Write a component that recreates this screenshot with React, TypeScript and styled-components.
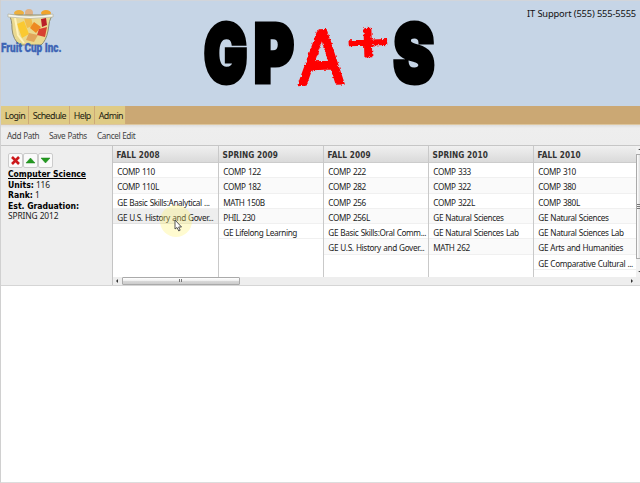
import React from "react";
import styled, { createGlobalStyle } from "styled-components";

const Global = createGlobalStyle`
  *{box-sizing:border-box}
  html,body{margin:0;padding:0;background:#fff;overflow:hidden}
  body{font-family:"Noto Sans",sans-serif;color:#222}
`;
const Page = styled.div`width:640px;height:483px;border-left:1px solid #d0d0d0;border-bottom:1px solid #ddd;background:#fff;overflow:hidden;`;
const Header = styled.header`height:106px;background:#c6d5e6;border-top:1px solid #d2d5da;display:grid;grid-template-columns:196px 250px 1fr;`;
const Brand = styled.svg`display:block;width:70px;height:60px;margin-left:-1px;overflow:visible;`;
const Title = styled.svg`display:block;width:250px;height:105px;overflow:visible;`;
const Support = styled.div`padding:6px 4px 0 0;text-align:right;font-size:9.3px;letter-spacing:-.14px;line-height:13px;color:#111;white-space:nowrap;`;
const Nav = styled.nav`display:flex;height:19px;background:#cba874;border-bottom:1px solid #ddc69f;`;
const NavItem = styled.a<{ $w: number }>`width:${p => p.$w}px;background:#dfcb85;border-right:1px solid #cda977;padding-left:3.8px;font-size:8.9px;letter-spacing:-.6px;line-height:20px;color:#1b1a10;white-space:nowrap;`;
const Toolbar = styled.div`height:21px;background:linear-gradient(#dedede,#eee 3px,#ededed);border-bottom:1px solid #c6c6c6;display:flex;padding-left:6px;`;
const Tool = styled.span<{ $w: number }>`width:${p => p.$w}px;font-size:8.2px;letter-spacing:-.4px;word-spacing:.4px;line-height:22px;color:#444;white-space:nowrap;`;
const Workspace = styled.main`display:flex;height:140px;background:#eee;border-bottom:1px solid #d5d5d5;`;
const Summary = styled.aside`width:112px;border-right:1px solid #c4c4c4;padding:7px 0 0 7px;font-size:8.4px;letter-spacing:-.1px;line-height:10.6px;color:#222;b{color:#000;font:bold 8.6px "DejaVu Sans Condensed","DejaVu Sans",sans-serif;letter-spacing:0}`;
const Buttons = styled.div`display:flex;height:16px;`;
const IconButton = styled.button`width:15px;height:15px;padding:1px;background:#fafafa;border:1px solid #ccc;border-radius:2px;svg{display:block}`;
const Degree = styled.div`font:bold 8.5px/10.6px "DejaVu Sans Condensed","DejaVu Sans",sans-serif;letter-spacing:0;text-decoration:underline;color:#000;`;
const GridArea = styled.section`flex:1;min-width:0;`;
const Columns = styled.div`display:flex;height:131px;background:#fff;`;
const Column = styled.div<{ $w: number; $last: boolean }>`width:${p => p.$w}px;flex:none;border-right:${p => p.$last ? "0" : "1px solid #c9c9c9"};`;
const Head = styled.div`height:17px;padding-left:3.5px;background:linear-gradient(#f0f0f0,#dadada);border-bottom:1px solid #ccc;font:bold 8.2px/19px "DejaVu Sans Condensed","DejaVu Sans",sans-serif;letter-spacing:.1px;color:#333;white-space:nowrap;`;
const Course = styled.div<{ $alt: boolean; $active: boolean }>`height:15.25px;padding-left:4.3px;white-space:nowrap;font-size:8.2px;letter-spacing:-.36px;word-spacing:.5px;line-height:17px;color:#222;background:${p => p.$active ? "#eee" : p.$alt ? "#fafafa" : "#fff"};border-bottom:1px solid ${p => p.$active ? "#e2e2e2" : "#f0f0f0"};`;
const VBar = styled.div`width:5px;background:#f1f1f1;display:flex;flex-direction:column;align-items:center;svg{display:block}`;
const VThumb = styled.div`width:5px;height:105px;margin-top:1px;border:1px solid #aaa;background:linear-gradient(90deg,#fff,#ddd);display:flex;align-items:center;justify-content:flex-end;`;
const HBar = styled.div`height:8px;display:flex;align-items:center;background:#eee;svg{display:block}`;
const HThumb = styled.div`width:118px;height:8px;border:1px solid #aaa;border-radius:1px;background:linear-gradient(#fff,#eee 50%,#d8d8d8 55%,#ccc);display:flex;align-items:center;justify-content:center;`;
const Push = styled.span`flex:1;`;
const Pointer = styled.svg`position:absolute;left:156px;top:201px;width:40px;height:40px;pointer-events:none;`;

const terms = [
  { name: "FALL 2008", width: 106, courses: ["COMP 110", "COMP 110L", "GE Basic Skills:Analytical ...", "GE U.S. History and Gover..."] },
  { name: "SPRING 2009", width: 105, courses: ["COMP 122", "COMP 182", "MATH 150B", "PHIL 230", "GE Lifelong Learning"] },
  { name: "FALL 2009", width: 105, courses: ["COMP 222", "COMP 282", "COMP 256", "COMP 256L", "GE Basic Skills:Oral Comm...", "GE U.S. History and Gover..."] },
  { name: "SPRING 2010", width: 105, courses: ["COMP 333", "COMP 322", "COMP 322L", "GE Natural Sciences", "GE Natural Sciences Lab", "MATH 262"] },
  { name: "FALL 2010", width: 102, courses: ["COMP 310", "COMP 380", "COMP 380L", "GE Natural Sciences", "GE Natural Sciences Lab", "GE Arts and Humanities", "GE Comparative Cultural ..."] },
];

const FruitLogo = () => (
  <Brand viewBox="0 0 70 60">
    <g transform="translate(0 -1)">
      <ellipse cx="19" cy="13" rx="5" ry="3" fill="#edb03e" /><ellipse cx="29" cy="13" rx="4" ry="4" fill="#dfb286" /><ellipse cx="46" cy="13" rx="5" ry="3" fill="#f0a32c" />
      <path d="M9 15H52Q49 20 48 31Q46 41 41 45H20Q13 40 12 29Q12 19 9 15Z" fill="#ead98f" stroke="#8e8d73" />
      <path d="M17 24L24 21L29 34L22 38Z" fill="#fac931" /><path d="M24 18L31 17L33 26L27 28Z" fill="#f1bd4b" />
      <path d="M34 22L41 27L36 33L30 28Z" fill="#ee8a21" /><path d="M41 19L46 18L47 25L42 27Z" fill="#b91f28" /><path d="M39 29L47 27L45 37L37 35Z" fill="#d84031" />
      <path d="M29 33L38 35L34 42L26 40Z" fill="#e1a65b" /><path d="M15 18L18 35L24 43" fill="none" stroke="#fff3bd" strokeWidth="2" />
      <path d="M8 14Q30 18 53 14V17Q30 20 8 17Z" fill="#f8f7eb" stroke="#aaa995" strokeWidth=".6" />
    </g>
    <text x="1" y="50.5" fontFamily="Roboto, sans-serif" fontWeight="900" fontSize="12.5" fill="#3e65b5" stroke="#3e65b5" strokeWidth=".3" textLength="60.5" lengthAdjust="spacingAndGlyphs">Fruit Cup Inc.</text>
  </Brand>
);

const GradeLogo = () => (
  <Title viewBox="197 1 250 105">
    <defs><filter id="chalk" x="-20%" y="-20%" width="140%" height="140%"><feTurbulence type="fractalNoise" baseFrequency=".4" numOctaves="2" seed="4" /><feDisplacementMap in="SourceGraphic" scale="3.5" xChannelSelector="R" yChannelSelector="G" /></filter></defs>
    <g fontFamily="Inter, sans-serif" fontWeight="900" stroke="#000" strokeWidth="5" strokeLinejoin="miter" strokeMiterlimit="2" fontSize="80">
      <text transform="translate(204 81.5) scale(.715 1)">G</text>
      <text transform="translate(254 82) scale(.755 1)">P</text>
      <text transform="translate(393.5 81.5) scale(.765 1)">S</text>
    </g>
    <g fill="#f00" stroke="#f00" fontFamily="Liberation Sans, sans-serif" filter="url(#chalk)">
      <text transform="translate(299 84.5) rotate(-2) skewX(-3) scale(.86 1)" fontSize="77" strokeWidth="3.2">A</text>
      <text transform="translate(347 62) rotate(-2) scale(1.32 1)" fontSize="56" strokeWidth="2">+</text>
    </g>
  </Title>
);

const Arrow = ({ down = false }: { down?: boolean }) => <svg width="11" height="11" viewBox="0 0 11 11"><path d={down ? "M1 3H10L5.5 8Z" : "M1 8H10L5.5 3Z"} fill="#249a20" stroke="#18821a" strokeWidth=".5" /></svg>;
const Left = () => <svg width="9" height="8" viewBox="0 0 9 8"><path d="M5 2V6L3 4Z" fill="#333" /></svg>;
const Right = () => <svg width="13" height="8" viewBox="0 0 13 8"><path d="M4 2V6L6 4Z" fill="#333" /></svg>;

export default function App() {
  return <><Global /><Page>
    <Header><FruitLogo /><GradeLogo /><Support>IT Support (555) 555-5555</Support></Header>
    <Nav><NavItem $w={28}>Login</NavItem><NavItem $w={41}>Schedule</NavItem><NavItem $w={25}>Help</NavItem><NavItem $w={31}>Admin</NavItem></Nav>
    <Toolbar><Tool $w={42}>Add Path</Tool><Tool $w={48}>Save Paths</Tool><Tool $w={50}>Cancel Edit</Tool></Toolbar>
    <Workspace>
      <Summary>
        <Buttons><IconButton aria-label="Remove"><svg width="11" height="11" viewBox="0 0 11 11"><path d="M2 2L9 9M9 2L2 9" stroke="#cc191b" strokeWidth="2.6" /></svg></IconButton><IconButton aria-label="Move up"><Arrow /></IconButton><IconButton aria-label="Move down"><Arrow down /></IconButton></Buttons>
        <Degree>Computer Science</Degree><div><b>Units:</b> 116</div><div><b>Rank:</b> 1</div><div><b>Est. Graduation:</b></div><div>SPRING 2012</div>
      </Summary>
      <GridArea>
        <Columns>
          {terms.map((t, i) => <Column key={t.name} $w={t.width} $last={i === 4}><Head>{t.name}</Head>{t.courses.map((c, j) => <Course key={c} $alt={j % 2 === 1} $active={i === 0 && j === 3}>{c}</Course>)}</Column>)}
          <VBar><svg width="5" height="7" viewBox="0 0 5 7"><path d="M2 4H5V2Z" fill="#333" /></svg><VThumb><svg width="3" height="5" viewBox="0 0 3 5"><path d="M0 .5H3M0 2.5H3M0 4.5H3" stroke="#777" /></svg></VThumb><svg width="5" height="16" viewBox="0 0 5 16"><path d="M2 12H5V14Z" fill="#333" /></svg></VBar>
        </Columns>
        <HBar><Left /><HThumb><svg width="4" height="4" viewBox="0 0 4 4"><path d="M.5 0V3M2.5 0V3" stroke="#777" /></svg></HThumb><Push /><Right /></HBar>
      </GridArea>
    </Workspace>
    <Pointer viewBox="0 0 40 40"><circle cx="20" cy="20" r="16" fill="#fff36d" fillOpacity=".32" /><path d="M19 19V28L21 26.5L22.8 30L24.2 29.2L22.6 26H25.5Z" fill="#fff" stroke="#444" strokeWidth=".9" /></Pointer>
  </Page></>;
}
